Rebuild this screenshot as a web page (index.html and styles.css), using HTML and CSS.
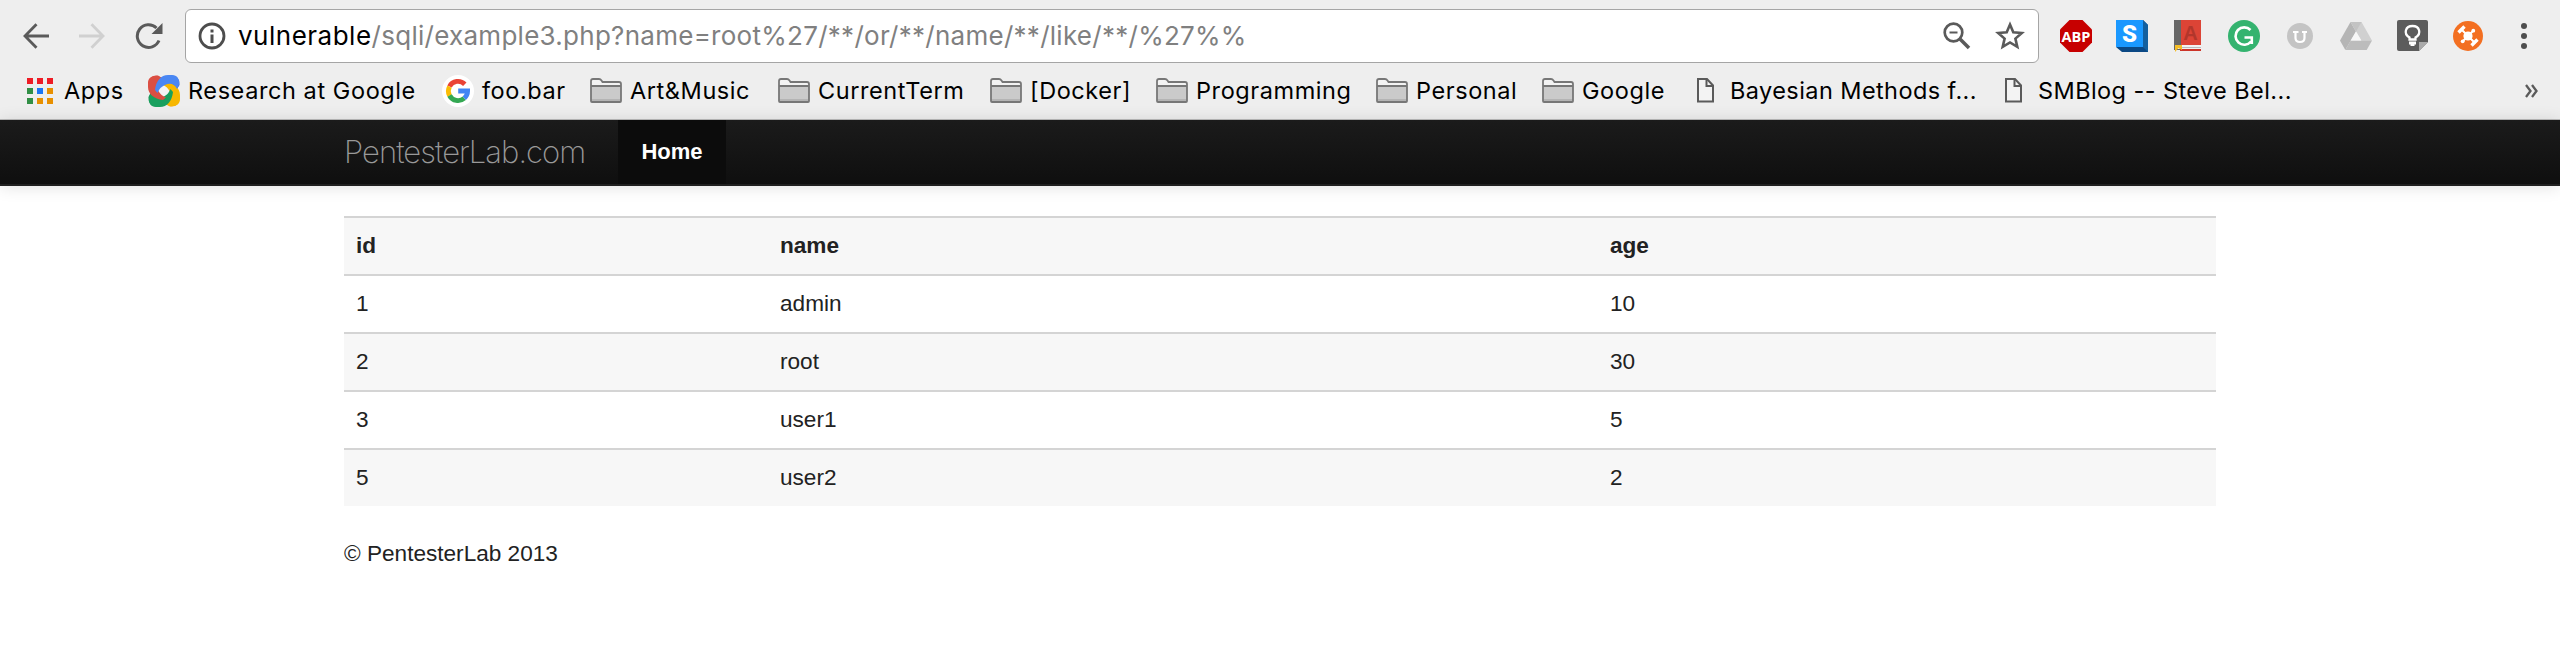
FILE: index.html
```html
<!DOCTYPE html>
<html lang="en">
<head>
<meta charset="utf-8">
<title>PentesterLab</title>
<link rel="stylesheet" href="styles.css">
</head>
<body>
<svg class="defs" width="0" height="0">
  <symbol id="folder" viewBox="0 0 32 26">
    <path d="M1 24V3Q1 1 3 1H9Q10.500 1 11.500 2.500L12.500 4H29Q31 4 31 6V24Z" fill="#f3f3f3"/>
    <path d="M1 8H31V24H1Z" fill="#cacaca"/>
    <path d="M1 21H31V24H1Z" fill="#b4b4b4"/>
    <path d="M1 23V3Q1 1 3 1H9Q10.500 1 11.500 2.500L12.500 4H29Q31 4 31 6V23Q31 24 30 24H2Q1 24 1 23ZM1 8H31" fill="none" stroke="#777" stroke-width="1.800"/>
  </symbol>
  <symbol id="page" viewBox="0 0 17 25">
    <path d="M1 1H10L16 7.500V23.500H1Z" fill="#f3f3f3" stroke="#5a5a5a" stroke-width="2"/>
    <path d="M9.500 1V8H16" fill="none" stroke="#5a5a5a" stroke-width="2"/>
  </symbol>
  <symbol id="band" viewBox="0 0 32 32">
    <path d="M7 15C8 6 13 0 20 0H24C29 0 32 4 31 10L29 14C27 9 22 7.500 17 10C13 12 11.500 13.500 9.500 18Z"/>
  </symbol>
</svg>

<header class="chrome">
  <div class="toolbar">
    <nav class="controls">
      <svg width="26" height="26" viewBox="0 0 26 26" fill="none" stroke="#5a5a5a" stroke-width="2.800"><path d="M26 13H2.500M13.500 1.200L2 13L13.500 24.800"/></svg>
      <svg width="26" height="26" viewBox="0 0 26 26" fill="none" stroke="#d0d0d0" stroke-width="2.800"><path d="M0 13H23.500M12.500 1.200L24 13L12.500 24.800"/></svg>
      <svg width="28" height="28" viewBox="0 0 28 28"><path d="M24 18.500A11.300 11.300 0 1 1 21.500 6" fill="none" stroke="#5a5a5a" stroke-width="3"/><path d="M27.500 1V12H16.500Z" fill="#5a5a5a"/></svg>
    </nav>
    <div class="omnibox">
      <svg width="28" height="28" viewBox="0 0 28 28"><circle cx="14" cy="14" r="12" fill="none" stroke="#4d4d4d" stroke-width="2.800"/><path d="M12.500 7.500h3v3h-3zM12.500 12.500h3v8.500h-3z" fill="#4d4d4d"/></svg>
      <span class="url"><span class="host">vulnerable</span>/sqli/example3.php?name=root%27/**/or/**/name/**/like/**/%27%%</span>
      <svg class="lens" width="28" height="28" viewBox="0 0 28 28" fill="none" stroke="#5a5a5a"><circle cx="10.500" cy="10.500" r="8.800" stroke-width="2.700"/><path d="M6.500 10.500h8" stroke-width="2"/><path d="M17 17L26 26" stroke-width="3.600"/></svg>
      <svg width="30" height="30" viewBox="0 0 30 30"><path d="M15 3.500L18.300 11.300L26.800 12L20.400 17.600L22.300 25.900L15 21.500L7.700 25.900L9.600 17.600L3.200 12L11.700 11.300Z" fill="none" stroke="#5a5a5a" stroke-width="2.600"/></svg>
    </div>
    <div class="extensions">
      <svg class="abp-icon" width="32" height="32" viewBox="0 0 32 32"><path d="M9.500 0H22.500L32 9.500V22.500L22.500 32H9.500L0 22.500V9.500Z" fill="#c70000"/><text x="16" y="22" class="abp">ABP</text></svg>
      <svg width="32" height="32" viewBox="0 0 32 32"><path d="M27 0L32 5V32H6L0 27Z" fill="#0b4884"/><path d="M27 0L32 5V32L27 27Z" fill="#13609f"/><path d="M0 0H27V27H0Z" fill="#1a98ff"/><text x="13.500" y="22" class="s-letter">S</text></svg>
      <svg width="28" height="32" viewBox="0 0 28 32"><path d="M0 0H7V30H0Z" fill="#666"/><path d="M7 0H27V25H7Z" fill="#dc4436"/><path d="M3 25H27V29H3Z" fill="#f2f2f2"/><path d="M5 27H27V28H5Z" fill="#bbb"/><path d="M6 29H27V31H6Z" fill="#cc352a"/><text x="16.500" y="20" class="a-letter">A</text><path d="M1 25H8V30L4.500 28L1 32Z" fill="#f5bd25"/></svg>
      <svg width="32" height="32" viewBox="0 0 32 32"><circle cx="16" cy="16" r="16" fill="#34b36f"/><path d="M22.500 10A8.700 8.700 0 1 0 23 21.500M16.500 17.500H23.800V24" fill="none" stroke="#fff" stroke-width="2.600"/></svg>
      <svg width="26" height="26" viewBox="0 0 26 26"><circle cx="13" cy="13" r="13" fill="#c4c4c4"/><path d="M6 9H11.500M15 9H20M8.500 9V15Q8.500 19 13 19Q17.500 19 17.500 15V9" fill="none" stroke="#fff" stroke-width="2.200"/></svg>
      <svg width="32" height="28" viewBox="0 0 32 28"><path d="M10.500 0L0 18.500L5.300 28L16 9.500Z" fill="#b5b5b5"/><path d="M10.500 0H21.500L32 18.500H21.300Z" fill="#d0d0d0"/><path d="M5.300 28L10.700 18.500H32L26.700 28Z" fill="#bcbcbc"/><path d="M10.500 0H21.500L16 9.500Z" fill="#c3c3c3"/><path d="M16 9.500L21.300 18.500H10.700Z" fill="#f7f7f7"/></svg>
      <svg width="31" height="32" viewBox="0 0 31 32"><path d="M2 0H29Q31 0 31 2V22L22 31H2Q0 31 0 29V2Q0 0 2 0Z" fill="#5c5c5c"/><path d="M22 31V22H31Z" fill="#aaa"/><path d="M12.500 19.500V17.500C6 13.500 8.500 6 15.500 6S25 13.500 18.500 17.500V19.500Z" fill="none" stroke="#fff" stroke-width="2.300"/><path d="M12 21.500H19V24.500H17.500V26H13.500V24.500H12Z" fill="#fff"/></svg>
      <svg width="30" height="30" viewBox="0 0 30 30"><circle cx="15" cy="15" r="15" fill="#f36f21"/><path d="M9 9L21 21M21 9L9 21" stroke="#fff" stroke-width="2"/><circle cx="15" cy="15" r="4.600" fill="#fff"/><path d="M5.500 11.500L11.500 5.500M18.500 24.500L24.500 18.500" stroke="#fff" stroke-width="3.400"/><circle cx="20.300" cy="9.700" r="1.900" fill="#fff"/><circle cx="9.700" cy="20.300" r="1.900" fill="#fff"/></svg>
    </div>
    <svg width="6" height="26" viewBox="0 0 6 26" fill="#4d4d4d"><circle cx="3" cy="3" r="3"/><circle cx="3" cy="13" r="3"/><circle cx="3" cy="23" r="3"/></svg>
  </div>

  <div class="bookmarks">
    <a class="bookmark apps"><svg width="26" height="26" viewBox="0 0 26 26"><path d="M0 0h6v6H0zM10 0h6v6h-6zM20 0h6v6h-6z" fill="#ee1c25"/><path d="M0 10h6v6H0zM0 20h6v6H0z" fill="#318f45"/><path d="M10 10h6v6h-6z" fill="#1b76f5"/><path d="M20 10h6v6h-6zM10 20h6v6h-6zM20 20h6v6h-6z" fill="#e89000"/></svg>Apps</a>
    <a class="bookmark research"><svg width="32" height="32" viewBox="0 0 32 32">
      <path d="M2 10Q0 0 10 0.500L14 3L5 14Z" fill="#db4f43"/>
      <path d="M22 0.500Q32 0 31.500 10L29 14L20 6Z" fill="#2f63cf"/>
      <path d="M31.500 22Q32 32 22 31.500L17 29L27 19Z" fill="#f7a400"/>
      <path d="M10 31.500Q0 32 0.500 22L3 17L12 26Z" fill="#0f8a4e"/>
      <path d="M16 10L22 16L16 22L10 16Z" fill="#f4f4f4"/>
      <use href="#band" width="32" height="32" fill="#f7b700" transform="rotate(90 16 16)"/>
      <use href="#band" width="32" height="32" fill="#19a05e" transform="rotate(180 16 16)"/>
      <use href="#band" width="32" height="32" fill="#db4f43" transform="rotate(270 16 16)"/>
      <use href="#band" width="32" height="32" fill="#4a87f3"/></svg>Research at Google</a>
    <a class="bookmark foobar"><svg width="32" height="32" viewBox="0 0 32 32"><circle cx="16" cy="16" r="16" fill="#fff"/><g fill="none" stroke-width="4.800"><path d="M22.800 9.200A9.600 9.600 0 0 0 7.500 11.500" stroke="#ea4335"/><path d="M7.500 11.500A9.600 9.600 0 0 0 7.500 20.500" stroke="#fbbc05"/><path d="M7.500 20.500A9.600 9.600 0 0 0 22.300 23.200" stroke="#34a853"/><path d="M22.300 23.200A9.600 9.600 0 0 0 25.600 16H16.200" stroke="#4285f4"/></g></svg>foo.bar</a>
    <a class="bookmark"><svg width="32" height="26"><use href="#folder"/></svg>Art&amp;Music</a>
    <a class="bookmark"><svg width="32" height="26"><use href="#folder"/></svg>CurrentTerm</a>
    <a class="bookmark"><svg width="32" height="26"><use href="#folder"/></svg>[Docker]</a>
    <a class="bookmark"><svg width="32" height="26"><use href="#folder"/></svg>Programming</a>
    <a class="bookmark"><svg width="32" height="26"><use href="#folder"/></svg>Personal</a>
    <a class="bookmark"><svg width="32" height="26"><use href="#folder"/></svg>Google</a>
    <a class="bookmark page"><svg width="17" height="25"><use href="#page"/></svg>Bayesian Methods f...</a>
    <a class="bookmark page"><svg width="17" height="25"><use href="#page"/></svg>SMBlog -- Steve Bel...</a>
    <svg class="more" width="13" height="14" viewBox="0 0 13 14" fill="none" stroke="#5a5a5a" stroke-width="2.300"><path d="M1 1L5.500 7L1 13M7 1L11.500 7L7 13"/></svg>
  </div>
</header>

<div class="navbar">
  <div class="container">
    <a class="brand">PentesterLab.com</a>
    <a class="nav-item">Home</a>
  </div>
</div>

<main class="container content">
  <table class="table">
    <tr><th class="col-id">id</th><th class="col-name">name</th><th>age</th></tr>
    <tr><td>1</td><td>admin</td><td>10</td></tr>
    <tr><td>2</td><td>root</td><td>30</td></tr>
    <tr><td>3</td><td>user1</td><td>5</td></tr>
    <tr><td>5</td><td>user2</td><td>2</td></tr>
  </table>
  <footer class="footer">© PentesterLab 2013</footer>
</main>
</body>
</html>
```
FILE: styles.css
```css
* { box-sizing: border-box; }
body {
  margin: 0;
  background: #fff;
  color: #222;
  font: 22.6px/36px "Liberation Sans", Arial, sans-serif;
  overflow: hidden;
}
svg { display: block; flex: none; }
.defs { position: absolute; }

.chrome {
  height: 120px;
  background: #eee;
  border-bottom: 1px solid #bbb;
  font-family: Inter, sans-serif;
  color: #000;
}
.toolbar {
  display: flex;
  align-items: center;
  height: 72px;
  padding: 0 33px 0 23px;
}
.controls { display: flex; align-items: center; gap: 30px; width: 162px; }
.omnibox {
  display: flex;
  align-items: center;
  width: 1854px;
  height: 54px;
  padding: 0 13px 0 12px;
  background: #fff;
  border: 1px solid #a5a5a5;
  border-radius: 6px;
}
.url {
  flex: 1;
  padding-left: 12px;
  font-size: 26px;
  letter-spacing: .27px;
  color: #808080;
  white-space: nowrap;
}
.host { color: #000; letter-spacing: .5px; }
.lens { margin-right: 24px; }
.extensions {
  display: grid;
  grid-template-columns: 56px 58px 54px 59px 53px 57px 56px 30px;
  align-items: center;
  margin: 0 auto 0 21px;
}
.abp-icon { overflow: visible; }
.abp { font: 700 14.5px "Open Sans", sans-serif; fill: #fff; text-anchor: middle; }
.s-letter { font: 900 24px "Roboto", sans-serif; fill: #fff; text-anchor: middle; }
.a-letter { font: 700 20px "Liberation Sans", sans-serif; fill: #b2362b; text-anchor: middle; }

.bookmarks {
  display: grid;
  grid-template-columns: 121px 294px 148px 188px 212px 166px 220px 166px 155px 308px 520px 13px;
  align-items: center;
  height: 37px;
  padding-left: 27px;
  font-size: 23.5px;
  line-height: 37px;
  letter-spacing: .58px;
}
.bookmark { display: flex; align-items: center; gap: 8px; white-space: nowrap; }
.apps { gap: 11px; }
.page { gap: 16px; letter-spacing: .42px; }

.navbar {
  height: 66px;
  background: linear-gradient(#1b1b1b, #0f0f0f);
  border-bottom: 2px solid #202020;
  box-shadow: 0 1px 16px rgba(0, 0, 0, .12);
}
.container { width: 1872px; margin: 0 auto; }
.navbar .container { display: flex; height: 64px; line-height: 64px; }
.brand {
  width: 274px;
  font-family: Inter, sans-serif;
  font-weight: 200;
  font-size: 31px;
  letter-spacing: -.95px;
  color: #999;
}
.nav-item {
  width: 108px;
  background: #0c0c0c;
  color: #fff;
  font-size: 22px;
  font-weight: 700;
  text-align: center;
}
.content { padding-top: 30px; }
.table { width: 100%; border-collapse: separate; border-spacing: 0; }
.table th, .table td {
  height: 58px;
  padding: 0 12px;
  border-top: 2px solid #d4d4d4;
  line-height: 36px;
  text-align: left;
}
.table tr:nth-child(odd) > * { background: #f7f7f7; }
.table th { font-size: 22.6px; }
.col-id { width: 424px; }
.col-name { width: 830px; }
.footer { padding-top: 30px; }
```
